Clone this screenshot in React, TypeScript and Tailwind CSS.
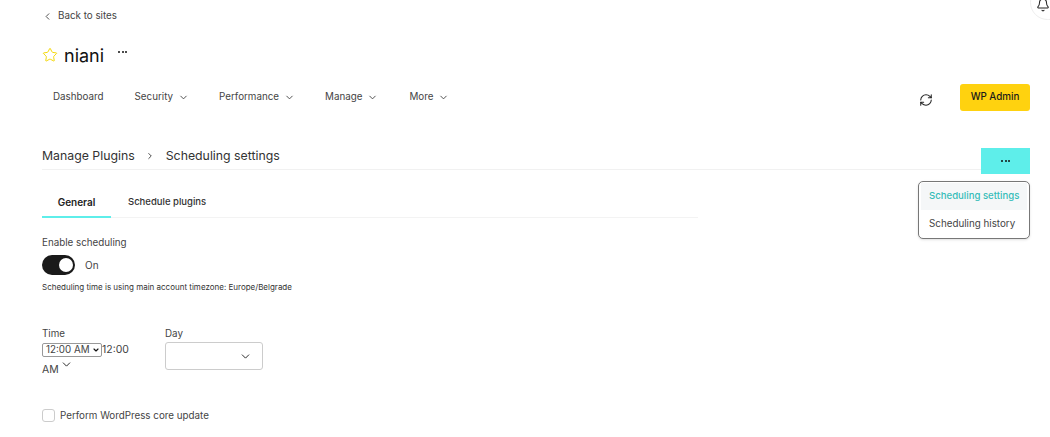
import { Bell, ChevronDown, ChevronLeft, ChevronRight, RefreshCw, Star } from 'lucide-react';

const navItems = [
    { name: 'Security', className: 'ml-[31px]' },
    { name: 'Performance', className: 'ml-[30px]' },
    { name: 'Manage', className: 'ml-[30px]' },
    { name: 'More', className: 'ml-[31px]' },
];

const Dots = () => (
    <span className="flex gap-[1.5px]">
        <span className="w-[2px] h-[2px] rounded-full bg-[#111]" />
        <span className="w-[2px] h-[2px] rounded-full bg-[#111]" />
        <span className="w-[2px] h-[2px] rounded-full bg-[#111]" />
    </span>
);

const App = () => {
    return (
        <div className="relative w-[1050px] h-[437px] overflow-hidden bg-white text-[#2b2b2b] font-['Inter',sans-serif]">
            {/* Bell, cut off by the top right corner */}
            <div className="absolute left-[1030px] top-[-15px] w-[36px] h-[35px] rounded-full border border-[#eeeeee] flex items-center justify-center pr-[10px] pt-[5px]">
                <Bell size={14} strokeWidth={1.75} className="text-[#222]" />
            </div>

            <div className="pl-[42px] pr-[20px]">
                <div className="h-[33px] flex items-center text-[9.8px] text-[#444]">
                    <ChevronLeft size={11} strokeWidth={2} />
                    <span className="ml-[5px]">Back to sites</span>
                </div>

                <div className="mt-[11px] h-[22px] flex items-center">
                    <Star size={16} strokeWidth={1.5} className="text-[#f5d90a]" />
                    <span className="ml-[6px] text-[18px] text-[#111]">niani</span>
                    <span className="ml-[14px] mb-[6px]">
                        <Dots />
                    </span>
                </div>

                <div className="mt-[18px] h-[28px] flex items-start justify-between">
                    <div className="h-[27px] flex items-center text-[9.8px] text-[#444] pl-[11px]">
                        <span>Dashboard</span>
                        {navItems.map((item) => (
                            <span key={item.name} className={`flex items-center gap-[5px] ${item.className}`}>
                                {item.name}
                                <ChevronDown size={11} strokeWidth={2} />
                            </span>
                        ))}
                    </div>
                    <div className="flex items-start">
                        <RefreshCw size={14} strokeWidth={1.75} className="text-[#222] mt-[9px]" />
                        <button className="ml-[27px] w-[70px] h-[27px] rounded-[3px] bg-[#ffd20f] text-[9.8px] font-medium text-[#1a1a1a]">
                            WP Admin
                        </button>
                    </div>
                </div>

                <div className="relative mt-[31px] h-[27px] flex items-center border-b border-[#f1f1f1]">
                    <span className="text-[12.3px] text-[#333]">Manage Plugins</span>
                    <ChevronRight size={10} strokeWidth={2} className="ml-[10px]" />
                    <span className="ml-[11px] text-[12.3px] text-[#333]">Scheduling settings</span>
                    <div className="absolute right-0 top-[5px] w-[49px] h-[26px] bg-[#5eeeea] flex items-center justify-center">
                        <Dots />
                    </div>
                </div>

                <div className="mt-[21px] w-[656px] h-[27px] flex border-b border-[#f3f3f3] text-[9.5px] font-medium">
                    <span className="w-[69px] h-[27px] pt-[4px] text-center border-b-2 border-[#5eeeea] text-[#222] font-semibold text-[10px]">General</span>
                    <span className="ml-[17px] pt-[4px] text-[#333]">Schedule plugins</span>
                </div>

                <p className="mt-[18px] text-[9.8px] leading-[13px] text-[#444]">Enable scheduling</p>

                <div className="mt-[6px] flex items-center">
                    <span className="w-[33px] h-[20px] rounded-full bg-[#1a1a1a] flex items-center justify-end pr-[2px]">
                        <span className="w-[14px] h-[14px] rounded-full bg-white" />
                    </span>
                    <span className="ml-[10px] mt-[1px] text-[10px] text-[#444]">On</span>
                </div>

                <p className="mt-[7px] text-[8px] leading-[10px] text-[#333]">
                    Scheduling time is using main account timezone: Europe/Belgrade
                </p>

                <div className="mt-[35px] flex">
                    <div className="w-[123px] text-[9.8px] text-[#444]">
                        <p className="leading-[13px]">Time</p>
                        <div className="mt-[3px] flex items-center h-[14px] text-[10.5px]">
                            <span className="w-[60px] h-[14px] border border-[#999] rounded-[2px] flex items-center justify-between pl-[3px] pr-[1px] text-[9.8px] whitespace-nowrap">
                                12:00 AM
                                <ChevronDown size={8} strokeWidth={3.5} className="text-[#111]" />
                            </span>
                            <span>12:00</span>
                        </div>
                        <div className="mt-[5px] flex text-[10.5px] leading-[16px]">
                            AM
                            <ChevronDown size={13} strokeWidth={1.75} className="ml-[1px] mt-[-4px] text-[#222]" />
                        </div>
                    </div>
                    <div className="text-[9.8px] text-[#444]">
                        <p className="leading-[13px]">Day</p>
                        <div className="mt-[2px] w-[98px] h-[28px] border border-[#cccccc] rounded-[3px] flex items-center justify-end pr-[10px]">
                            <ChevronDown size={13} strokeWidth={1.75} className="text-[#222]" />
                        </div>
                    </div>
                </div>

                <div className="mt-[30px] flex items-center">
                    <span className="w-[13px] h-[13px] border border-[#cccccc] rounded-[3px]" />
                    <span className="ml-[5px] mt-[1px] text-[9.8px] text-[#444]">Perform WordPress core update</span>
                </div>
            </div>

            {/* Dropdown menu */}
            <div className="absolute left-[918px] top-[181px] w-[112px] h-[58px] border border-[#777] rounded-[5px] bg-white shadow-sm px-[2px] pt-[1px] text-[9.8px] whitespace-nowrap">
                <div className="h-[27px] bg-[#f5f7f8] flex items-center pl-[8px] text-[#35bdb9] text-[9.6px] font-medium">Scheduling settings</div>
                <div className="h-[28px] flex items-center pl-[8px] text-[#444]">Scheduling history</div>
            </div>
        </div>
    );
};

export default App;
